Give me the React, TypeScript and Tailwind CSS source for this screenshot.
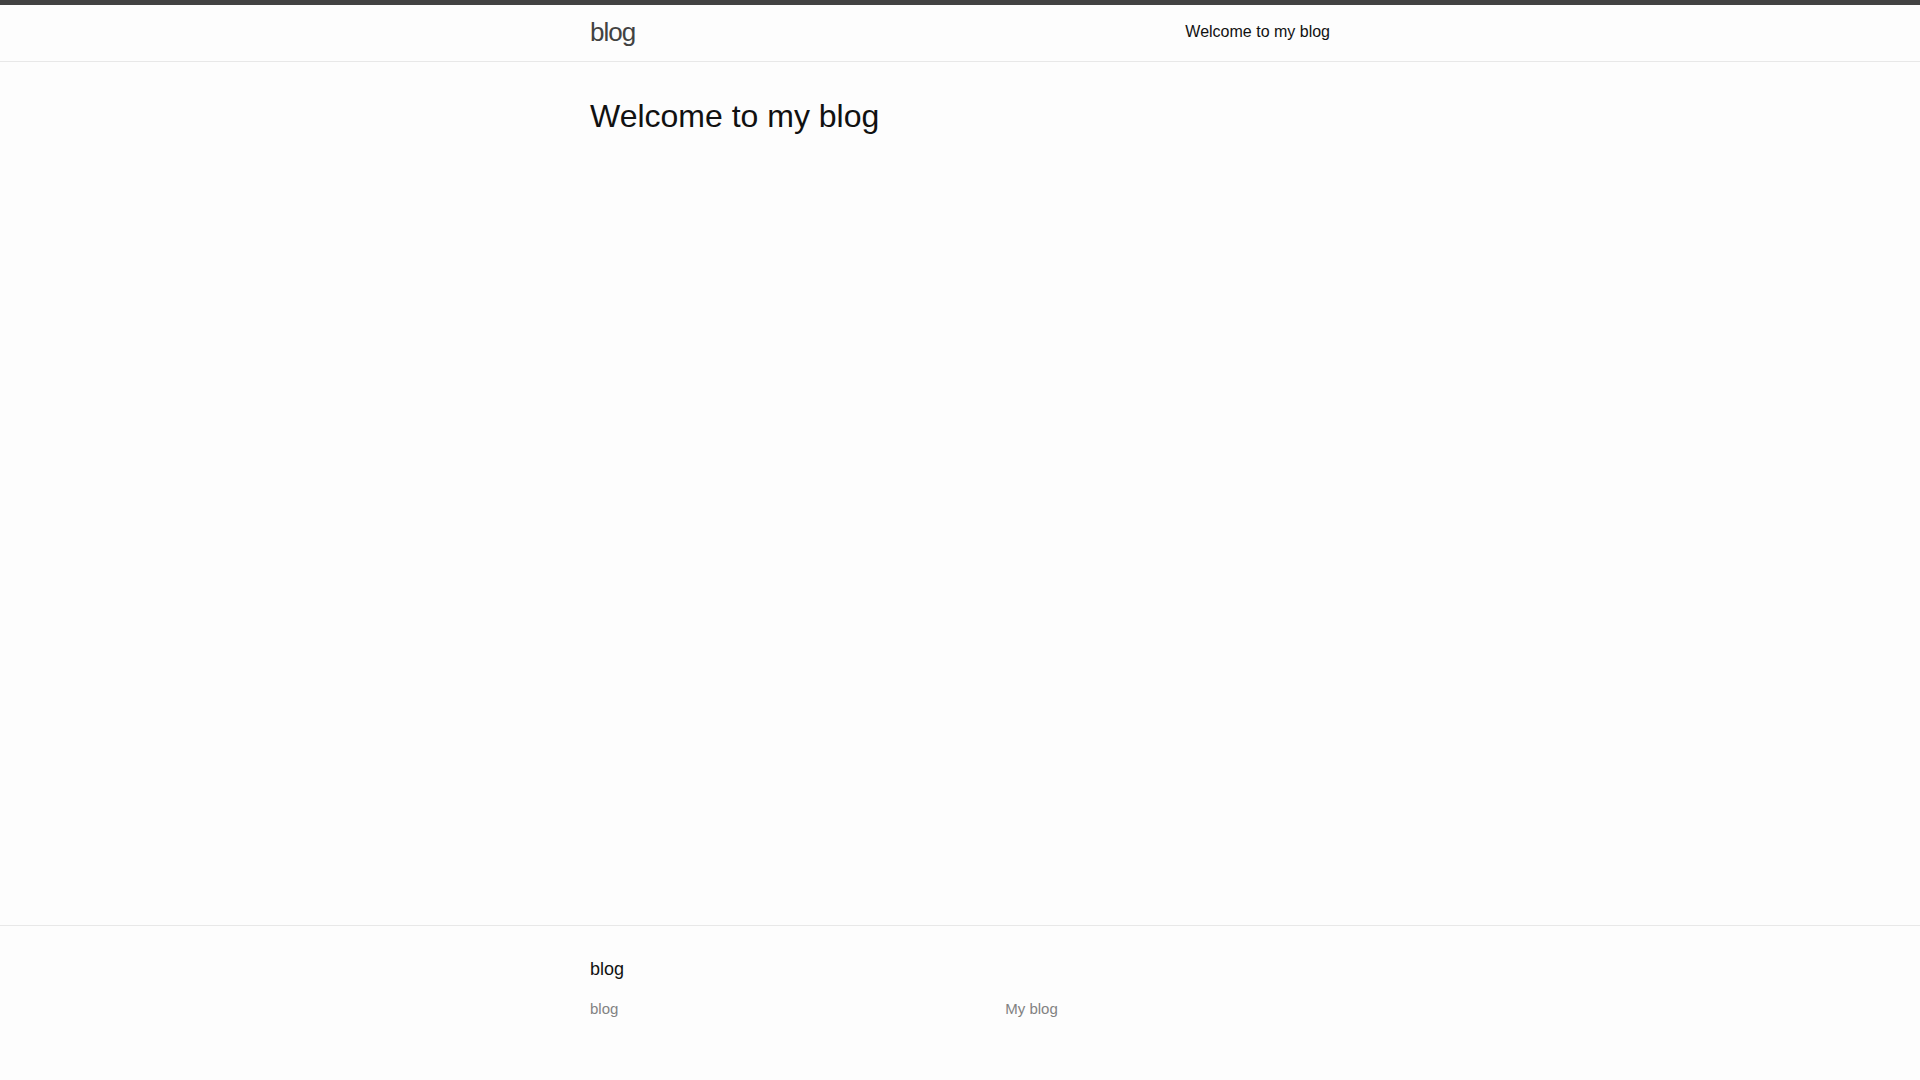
import React from "react";

export default function App() {
  return (
    <div className="min-h-screen flex flex-col bg-[#fdfdfd] text-[#111] text-[16px] leading-[1.5] font-['Liberation_Sans',Arial,sans-serif]">
      <header className="border-t-[5px] border-t-[#424242] border-b border-b-[#e8e8e8] min-h-[61.95px]">
        <div className="max-w-[800px] mx-auto px-[30px] flex justify-between items-start">
          <a className="text-[26px] leading-[54px] tracking-[-1px] text-[#424242]">blog</a>
          <nav className="leading-[54px]">
            <a className="text-[#111] leading-[1.5]">Welcome to my blog</a>
          </nav>
        </div>
      </header>
      <main className="flex-1 py-[30px]">
        <div className="max-w-[800px] mx-auto px-[30px]">
          <h1 className="text-[32px] leading-[1.5] mb-[15px]">Welcome to my blog</h1>
        </div>
      </main>
      <footer className="border-t border-t-[#e8e8e8] py-[30px]">
        <div className="max-w-[800px] mx-auto px-[30px]">
          <h2 className="text-[18px] leading-[1.5] mb-[15px]">blog</h2>
          <div className="flex items-start -ml-[15px] text-[15px] leading-[1.5] text-[#828282]">
            <div className="w-[35%] pl-[15px] mb-[15px]">
              <ul>
                <li>blog</li>
              </ul>
            </div>
            <div className="w-[20%] pl-[15px] mb-[15px]"></div>
            <div className="w-[45%] pl-[15px] mb-[15px]">
              <p className="mb-[15px]">My blog</p>
            </div>
          </div>
        </div>
      </footer>
    </div>
  );
}
